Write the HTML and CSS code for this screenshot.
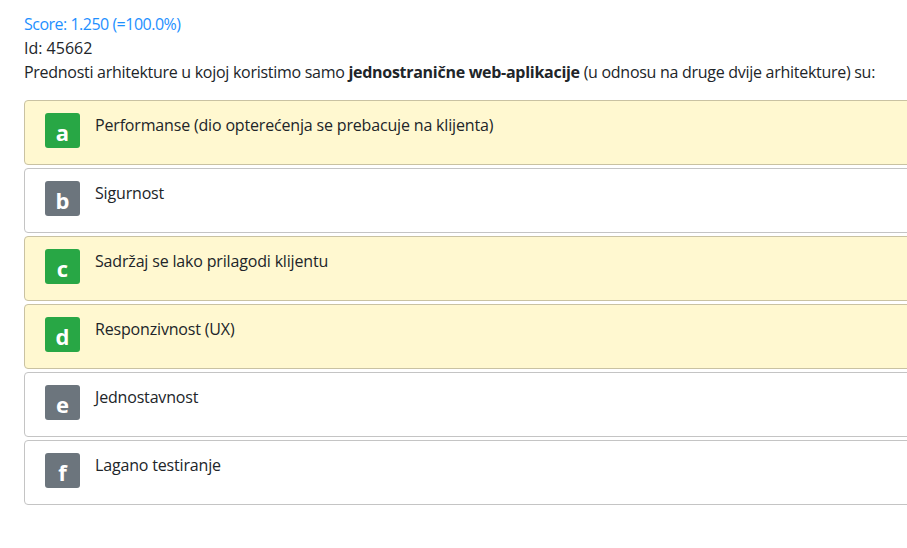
FILE: index.html
```html
<!DOCTYPE html>
<html>
<head>
<meta charset="utf-8">
<link rel="stylesheet" href="styles.css">
</head>
<body>
<div class="page">
  <div class="score">Score: 1.250 (=100.0%)</div>
  <div class="id">Id: 45662</div>
  <div class="question">Prednosti arhitekture u kojoj koristimo samo <b>jednostranične web-aplikacije</b> (u odnosu na druge dvije arhitekture) su:</div>
  <div class="answers">
    <div class="answer correct"><span class="badge green">a</span><span class="text">Performanse (dio opterećenja se prebacuje na klijenta)</span></div>
    <div class="answer"><span class="badge grey">b</span><span class="text">Sigurnost</span></div>
    <div class="answer correct"><span class="badge green">c</span><span class="text">Sadržaj se lako prilagodi klijentu</span></div>
    <div class="answer correct"><span class="badge green">d</span><span class="text">Responzivnost (UX)</span></div>
    <div class="answer"><span class="badge grey">e</span><span class="text">Jednostavnost</span></div>
    <div class="answer"><span class="badge grey">f</span><span class="text">Lagano testiranje</span></div>
  </div>
</div>
</body>
</html>
```
FILE: styles.css
```css
html, body {
  margin: 0;
  padding: 0;
  overflow: hidden;
  background: #fff;
}
body {
  font-family: "Open Sans", "Noto Sans", sans-serif;
  font-size: 16px;
  color: #212529;
}
.page {
  padding: 12px 0 0 24px;
  width: 920px;
}
.score {
  color: #1e90ff;
  line-height: 24px;
  letter-spacing: -0.5px;
}
.id, .question {
  line-height: 24px;
}
.question {
  letter-spacing: -0.28px;
}
.question b {
  font-weight: 700;
}
.answers {
  margin-top: 16px;
  display: flex;
  flex-direction: column;
  gap: 3px;
}
.answer {
  display: flex;
  align-items: flex-start;
  border: 1px solid #c4c4c4;
  border-radius: 4px;
  background: #fff;
  padding: 12px 0 0 20px;
  box-sizing: border-box;
  height: 65px;
}
.answer.correct {
  background: #fff8d0;
  border-color: #c9c2a2;
}
.badge {
  width: 35px;
  height: 35px;
  border-radius: 3px;
  color: #fff;
  font-weight: 700;
  font-size: 22px;
  display: flex;
  align-items: center;
  justify-content: center;
  line-height: 1;
  flex: none;
  padding-top: 2px;
  box-sizing: border-box;
}
.badge.green { background: #28a745; }
.badge.grey { background: #6c757d; }
.text {
  margin-left: 15px;
  line-height: 24px;
  letter-spacing: -0.17px;
}
```
